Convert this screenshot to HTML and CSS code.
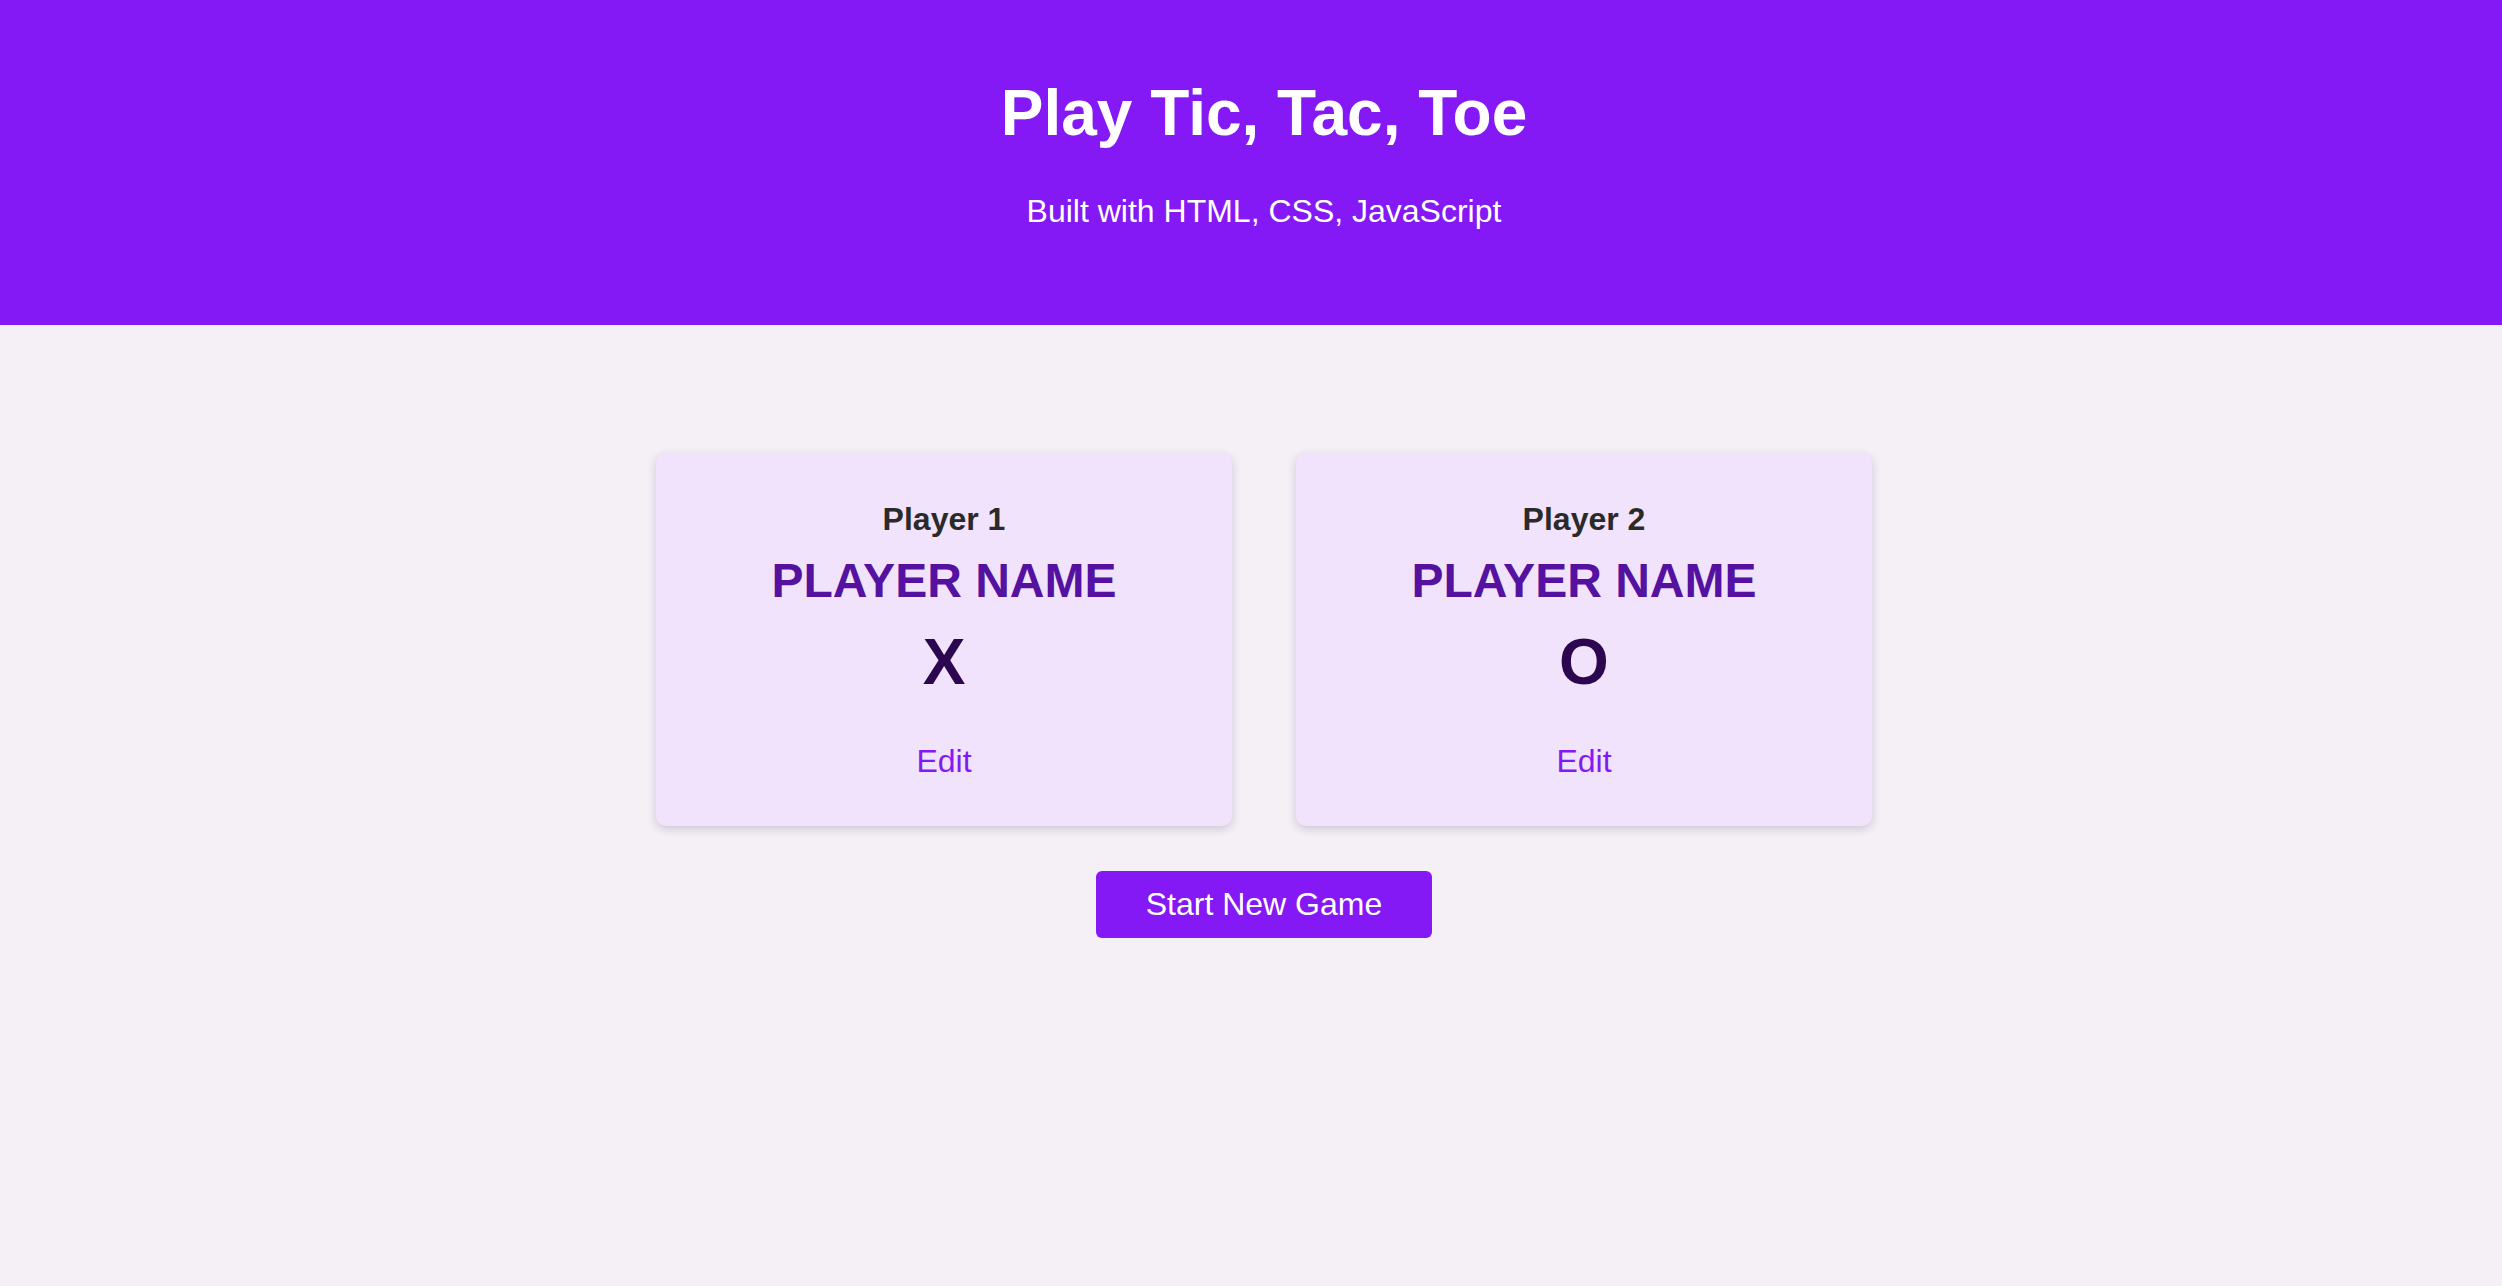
FILE: index.html
```html
<!DOCTYPE html>
<html lang="en">
<head>
<meta charset="utf-8">
<title>Play Tic, Tac, Toe</title>
<link rel="stylesheet" href="styles.css">
</head>
<body>
<header class="site-header">
  <h1 class="site-title">Play Tic, Tac, Toe</h1>
  <p class="site-subtitle">Built with HTML, CSS, JavaScript</p>
</header>
<main class="game-config">
  <ol class="players">
    <li class="player-card">
      <h2 class="player-label">Player 1</h2>
      <h3 class="player-name">PLAYER NAME</h3>
      <p class="player-symbol">X</p>
      <button class="btn-edit" type="button">Edit</button>
    </li>
    <li class="player-card">
      <h2 class="player-label">Player 2</h2>
      <h3 class="player-name">PLAYER NAME</h3>
      <p class="player-symbol">O</p>
      <button class="btn-edit" type="button">Edit</button>
    </li>
  </ol>
  <button class="btn-start" type="button">Start New Game</button>
</main>
</body>
</html>
```
FILE: styles.css
```css
* {
  box-sizing: border-box;
}

html, body {
  margin: 0;
  padding: 0;
}

body {
  font-family: "Liberation Sans", Arial, Helvetica, sans-serif;
  background: #f5eff6;
  color: #2a2a2a;
  min-height: 100vh;
}

.site-header {
  background: #8419f5;
  color: #ffffff;
  text-align: center;
  padding: 77px 0 94px 26px;
}

.site-title {
  margin: 0 0 42px;
  font-size: 64px;
  line-height: 72px;
  font-weight: 700;
}

.site-subtitle {
  margin: 0;
  font-size: 32px;
  line-height: 40px;
  font-weight: 400;
}

.game-config {
  display: flex;
  flex-direction: column;
  align-items: center;
  padding: 128px 0 0 26px;
}

.players {
  list-style: none;
  margin: 0 0 45px;
  padding: 0;
  display: flex;
  gap: 64px;
}

.player-card {
  width: 576px;
  height: 373px;
  background: #f0e3fb;
  border-radius: 10px;
  box-shadow: 0 3px 10px rgba(60, 30, 80, 0.2);
  text-align: center;
  padding: 46px 0 45px;
  display: flex;
  flex-direction: column;
  align-items: center;
}

.player-label {
  margin: 0 0 14px;
  font-size: 32px;
  line-height: 40px;
  font-weight: 700;
  color: #2a2a2a;
}

.player-name {
  margin: 0 0 17px;
  font-size: 48px;
  line-height: 56px;
  font-weight: 700;
  color: #5511a0;
}

.player-symbol {
  margin: 0 0 43px;
  font-size: 64px;
  line-height: 72px;
  font-weight: 700;
  color: #2c0750;
}

.btn-edit {
  font-family: inherit;
  font-size: 32px;
  line-height: 40px;
  color: #8419f5;
  background: none;
  border: 0;
  padding: 0;
  cursor: pointer;
}

.btn-start {
  font-family: inherit;
  font-size: 32px;
  line-height: 37px;
  color: #ffffff;
  background: #8419f5;
  border: 0;
  border-radius: 6px;
  width: 336px;
  padding: 15px 0;
  cursor: pointer;
}
```
